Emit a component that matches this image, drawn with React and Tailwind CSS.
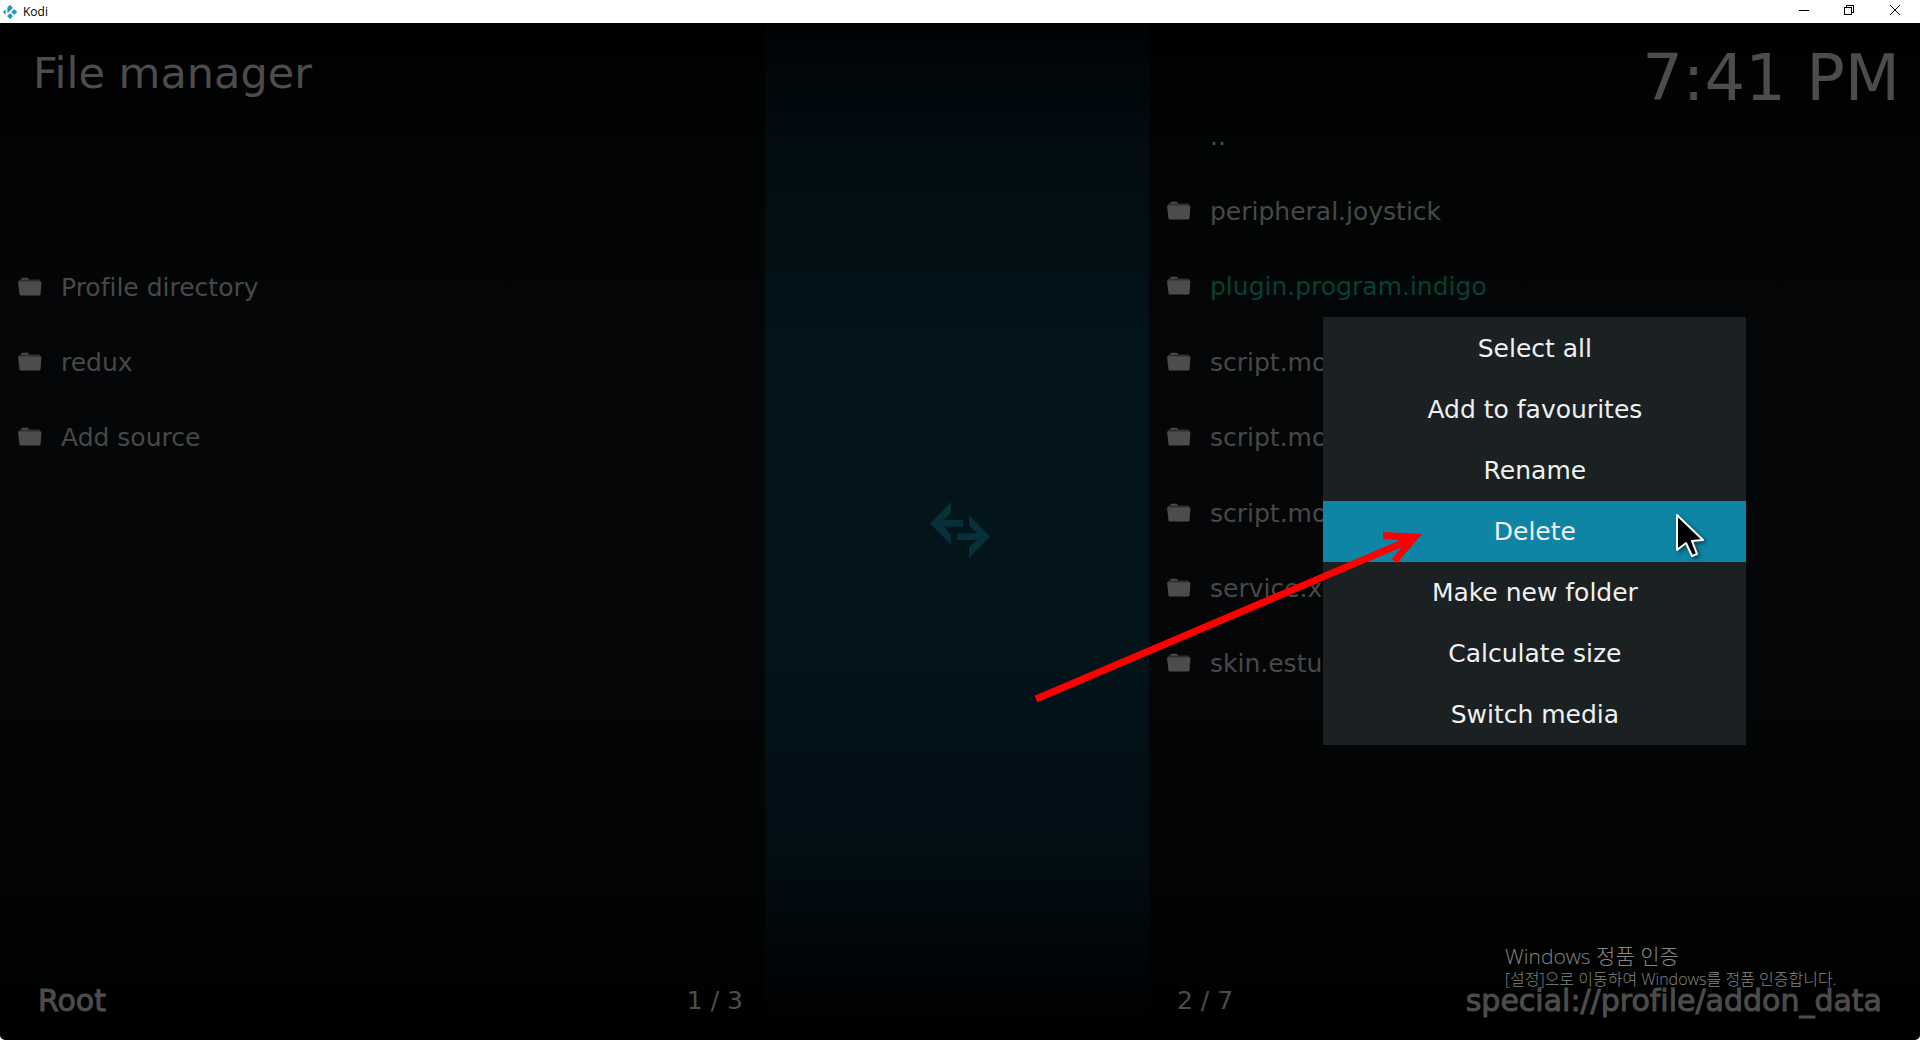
import React from 'react';
import { SiKodi } from 'react-icons/si';

const sources = ['Profile directory', 'redux', 'Add source'];

const files = [
    { name: '..', up: true },
    { name: 'peripheral.joystick' },
    { name: 'plugin.program.indigo', selected: true },
    { name: 'script.module.requests' },
    { name: 'script.module.simplejson' },
    { name: 'script.module.urlresolver' },
    { name: 'service.xbmc.versioncheck' },
    { name: 'skin.estuary' },
];

const menuItems = [
    'Select all',
    'Add to favourites',
    'Rename',
    'Delete',
    'Make new folder',
    'Calculate size',
    'Switch media',
];

const FolderIcon = () => (
    <svg width="24" height="22" viewBox="0 0 24 22" className="shrink-0" aria-hidden="true">
        <path d="M1 5V3l2-.5L4 1h6l1 1.5h11V6H1z" fill="#303030" />
        <path d="M3 2.5 4 .8h6l.8 1.7z" fill="#4c4c4c" />
        <path d="M0 4.500h23.500l-1 13-1 1h-19l-1-1z" fill="#4c4c4c" />
    </svg>
);

const FileRow = ({ name, up, selected }) => (
    <li className="flex min-h-0">
        <button
            className={`flex w-full items-center gap-[19px] pl-[18px] text-left ${
                selected ? 'text-[#044232]' : 'text-[#484848]'
            }`}
        >
            {up ? <span className="w-6 shrink-0" /> : <FolderIcon />}
            <span className="whitespace-nowrap">{name}</span>
        </button>
    </li>
);

const TitleBar = () => (
    <header className="flex h-[23px] shrink-0 items-center bg-white pl-[3px] text-black">
        <SiKodi className="text-[#1b94c9]" size={14} />
        <span className="ml-[6px] font-['Open_Sans','Noto_Sans',sans-serif] text-[12px] leading-4">Kodi</span>
        <div className="ml-auto flex h-full pb-[3px] pr-px">
            <button aria-label="Minimize" className="grid w-[45px] place-items-center">
                <svg width="10" height="10" viewBox="0 0 10 10" shapeRendering="crispEdges">
                    <path d="M0 5h10v1H0z" />
                </svg>
            </button>
            <button aria-label="Restore" className="grid w-[45px] place-items-center">
                <svg width="10" height="10" viewBox="0 0 10 10" fill="none" stroke="#000" shapeRendering="crispEdges">
                    <path d="M.5 2.500h7v7h-7zM2.500 2.500v-2h7v7h-2" />
                </svg>
            </button>
            <button aria-label="Close" className="grid w-[48px] place-items-center">
                <svg width="10" height="10" viewBox="0 0 10 10" stroke="#000">
                    <path d="M0 0l10 10M10 0L0 10" />
                </svg>
            </button>
        </div>
    </header>
);

const ContextMenu = () => (
    <ul
        role="menu"
        className="absolute left-[68.9%] top-[317px] w-[423px] bg-[#1b2122] pt-px text-[#f0f0f0]"
    >
        {menuItems.map((item) => (
            <li key={item} role="none">
                <button
                    role="menuitem"
                    className={`h-[61px] w-full pl-px pt-px text-center ${item === 'Delete' ? 'bg-[#0f85a5]' : ''}`}
                >
                    {item}
                </button>
            </li>
        ))}
    </ul>
);

const Pointer = () => (
    <svg
        className="absolute left-[87.2%] top-[512px] drop-shadow-[2px_2px_2px_rgba(0,0,0,0.5)]"
        width="34"
        height="48"
        viewBox="0 0 34 48"
        aria-hidden="true"
    >
        <path
            d="M3 3v35l9-7 6 13 5-2-5-13 11-1z"
            fill="#000"
            stroke="#fff"
            strokeWidth="2"
            strokeLinejoin="round"
        />
    </svg>
);

/* Red annotation arrow pointing at the highlighted entry */
const RedArrow = () => (
    <svg
        className="pointer-events-none absolute left-[53.8%] top-[525px]"
        width="400"
        height="185"
        viewBox="0 0 400 185"
        fill="#f00"
        aria-hidden="true"
    >
        <path d="M3 174 372 17" stroke="#f00" strokeWidth="7" />
        <path d="M350 7 389 9 364 38 359 34 371 19 365 15 350 14z" />
    </svg>
);

const App = () => {
    return (
        <div className="relative flex min-h-screen flex-col overflow-hidden bg-white font-['DejaVu_Sans',sans-serif] text-[25px] leading-8 [font-variant-ligatures:none]">
            <TitleBar />

            <main className="relative grid grow grid-cols-[765fr_384fr_771fr] overflow-hidden rounded-b-[5px] bg-[linear-gradient(to_bottom,#000_0%,#030505_16%,#040608_45%,#030505_80%,#000_98%)]">
                <section className="flex flex-col">
                    <h1 className="h-[227px] pl-[33px] pt-[24px] text-[43px] leading-[52px] text-[#4c4c4c]">
                        File manager
                    </h1>
                    <ul className="grid h-[226px] auto-rows-fr">
                        {sources.map((name) => (
                            <FileRow key={name} name={name} />
                        ))}
                    </ul>
                    <footer className="mt-auto flex h-[78px] items-center justify-between pl-[38px] pr-[22px] text-[#4c4c4c]">
                        <span className="text-[30px] [-webkit-text-stroke:1px_#4c4c4c]">Root</span>
                        <span>1 / 3</span>
                    </footer>
                </section>

                <div className="grid place-items-center bg-[linear-gradient(to_bottom,#000305_0%,#020d13_14%,#03151b_35%,#03151b_58%,#020d14_82%,#010507_92%,#000_99%)] pb-[3px] pl-[5px]">
                    <button aria-label="Swap panels">
                        <svg width="60" height="56" viewBox="0 0 60 56" fill="#07303b">
                            <path d="M21 0v10.500L13.500 18H33v6.500H13.500L21 32.500V43L0 21.500z" />
                            <path d="M39 13v10.500l8 8H27V38h20l-8 7.500V56l21-21.500z" />
                        </svg>
                    </button>
                </div>

                <section className="flex flex-col">
                    <time className="h-[76px] whitespace-nowrap pr-5 pt-[17px] text-right text-[64px] leading-[76px] text-[#4c4c4c]">
                        7:41 PM
                    </time>
                    <ul className="grid h-[603px] auto-rows-fr">
                        {files.map((file) => (
                            <FileRow key={file.name} {...file} />
                        ))}
                    </ul>
                    <footer className="mt-auto flex h-[78px] items-center justify-between pl-[28px] pr-[38px] text-[#4c4c4c]">
                        <span>2 / 7</span>
                        <span className="text-[30px] [-webkit-text-stroke:1px_#4c4c4c]">
                            special://profile/addon_data
                        </span>
                    </footer>
                </section>
            </main>

            <ContextMenu />
            <RedArrow />
            <Pointer />

            {/* Windows activation watermark */}
            <div
                lang="ko"
                className="pointer-events-none absolute bottom-[51px] right-[79px] w-[336px] whitespace-nowrap font-['Open_Sans','Noto_Sans_CJK_KR',sans-serif] font-light text-[#858585]"
            >
                <p className="text-[21px] leading-[26px]">Windows 정품 인증</p>
                <p className="text-[16px] leading-5">[설정]으로 이동하여 Windows를 정품 인증합니다.</p>
            </div>
        </div>
    );
};

export default App;
